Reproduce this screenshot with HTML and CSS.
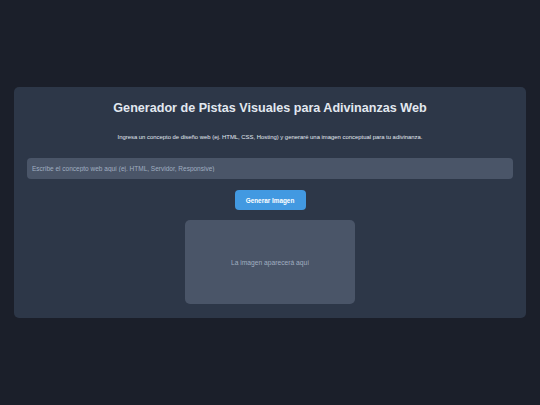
FILE: index.html
```html
<!DOCTYPE html>
<html lang="es">
<head>
<meta charset="utf-8">
<link rel="stylesheet" href="styles.css">
</head>
<body>
<div class="page">
  <main class="card">
    <h1 class="title">Generador de Pistas Visuales para Adivinanzas Web</h1>
    <p class="subtitle">Ingresa un concepto de diseño web (ej. HTML, CSS, Hosting) y generaré una imagen conceptual para tu adivinanza.</p>
    <input class="concept" type="text" placeholder="Escribe el concepto web aquí (ej. HTML, Servidor, Responsive)">
    <button class="generate">Generar Imagen</button>
    <div class="preview"><span class="preview-text">La imagen aparecerá aquí</span></div>
  </main>
</div>
</body>
</html>
```
FILE: styles.css
```css
* { box-sizing: border-box; }
html, body { margin: 0; padding: 0; }
body {
  background: #1b1f2a;
  font-family: "Liberation Sans", Arial, sans-serif;
  color: #e2e8f0;
}
.page {
  height: 405px;
  display: flex;
  align-items: center;
  justify-content: center;
  padding: 0 14px;
}
.card {
  width: 100%;
  background: #2d3748;
  border-radius: 5px;
  padding: 13px 13px 14px;
  display: flex;
  flex-direction: column;
  align-items: center;
}
.title {
  margin: 0;
  font-size: 12.6px;
  font-weight: bold;
  color: #e2e8f0;
  line-height: 16px;
}
.subtitle {
  margin: 17px 0 17px;
  font-size: 5.9px;
  line-height: 8px;
  color: #e2e8f0;
}
.concept {
  width: 100%;
  height: 21px;
  border: none;
  border-radius: 4px;
  background: #4a5568;
  color: #e2e8f0;
  font-family: "Liberation Sans", Arial, sans-serif;
  font-size: 6.5px;
  padding: 0 5px;
  outline: none;
}
.concept::placeholder { color: #a0aec0; }
.generate {
  margin-top: 11px;
  width: 71px;
  height: 20px;
  border: none;
  border-radius: 4px;
  background: #4299e1;
  color: #ffffff;
  font-family: "Liberation Sans", Arial, sans-serif;
  font-size: 6.4px;
  font-weight: bold;
  padding: 0;
}
.preview {
  margin-top: 10px;
  width: 170px;
  height: 84px;
  background: #4a5568;
  border-radius: 5px;
  display: flex;
  align-items: center;
  justify-content: center;
}
.preview-text {
  font-size: 6.7px;
  color: #a0aec0;
}
```
